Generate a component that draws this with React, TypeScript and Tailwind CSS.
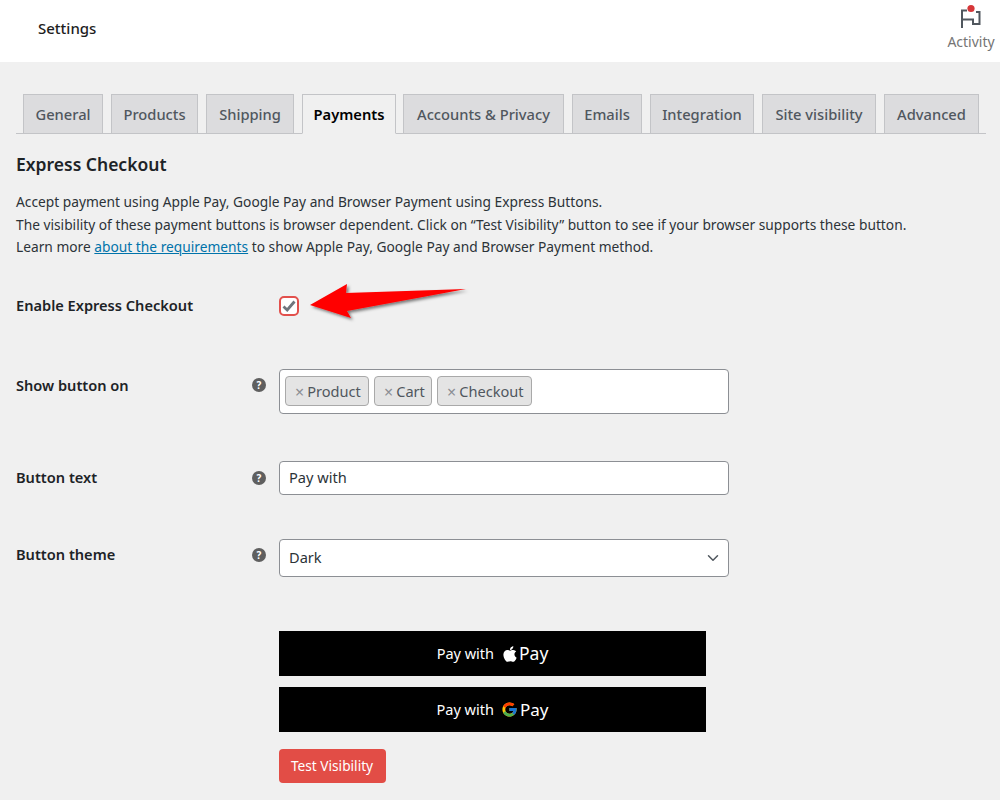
import React from "react";
import { FaApple } from "react-icons/fa";
import { FcGoogle } from "react-icons/fc";
import { FiChevronDown } from "react-icons/fi";

const tabs = [
  { name: "General", w: "w-[80px]" },
  { name: "Products", w: "w-[87px]" },
  { name: "Shipping", w: "w-[88px]" },
  { name: "Payments", w: "w-[94px]", active: true },
  { name: "Accounts & Privacy", w: "w-[161px] ml-[-1px]" },
  { name: "Emails", w: "w-[70px]" },
  { name: "Integration", w: "w-[104px]" },
  { name: "Site visibility", w: "w-[114px]" },
  { name: "Advanced", w: "w-[95px]" },
];

function Help() {
  return (
    <div className="flex h-[14px] w-[14px] items-center justify-center rounded-full bg-[#5f5f5f] text-[10px] font-bold leading-none text-white">
      ?
    </div>
  );
}

function Chip({ label, w }: { label: string; w: string }) {
  return (
    <div className={`flex h-[30px] items-center gap-[3px] rounded-[4px] border border-[#a9a9a9] bg-[#e4e4e4] pl-[9px] pt-[1px] text-[14.6px] text-[#50575e] ${w}`}>
      <span className="text-[16px] leading-none text-[#8c8f94]">×</span>
      <span>{label}</span>
    </div>
  );
}

export default function App() {
  return (
    <div className="relative h-[800px] w-[1000px] overflow-hidden bg-[#f0f0f0] font-['Noto_Sans',sans-serif] text-[14.6px] text-[#2c3338]">
      <header className="flex h-[62px] items-start justify-between bg-white">
        <div className="ml-[38px] mt-[18px] text-[15px] leading-[20px] font-medium text-[#1e1e1e]">Settings</div>
        <div className="mr-[5px] mt-[4px] flex w-[48px] flex-col items-center">
          <svg width="24" height="24" viewBox="0 0 24 24" fill="none">
            <path d="M3 24V6.5H8M3 15.5H14V20H20.5V8H17" stroke="#50575e" strokeWidth="2" />
            <circle cx="12" cy="4.5" r="3.6" fill="#d63638" />
          </svg>
          <div className="mt-[5px] text-[14px] leading-[18px] text-[#757575]">Activity</div>
        </div>
      </header>

      <main className="px-[16px]">
        <nav className="mr-[-2px] mt-[32px] flex h-[40px] gap-[8px] border-b border-[#c3c4c7] pl-[7px]">
          {tabs.map((t) => (
            <div
              key={t.name}
              className={`flex h-[40px] shrink-0 items-center justify-center border border-[#c3c4c7] pt-[1px] text-[14.7px] font-medium ${t.w} ${
                t.active ? "border-b-[#f0f0f0] bg-[#f0f0f0] font-semibold text-black" : "bg-[#dcdcde] text-[#50575e]"
              }`}
            >
              {t.name}
            </div>
          ))}
        </nav>

        <h2 className="mt-[17px] text-[17.5px] leading-[26px] font-semibold text-[#1d2327]">Express Checkout</h2>

        <div className="mt-[14px] text-[13.75px] leading-[22.5px]">
          <p>Accept payment using Apple Pay, Google Pay and Browser Payment using Express Buttons.</p>
          <p>The visibility of these payment buttons is browser dependent. Click on “Test Visibility” button to see if your browser supports these button.</p>
          <p>
            Learn more <span className="text-[#0073aa] underline">about the requirements</span> to show Apple Pay, Google Pay and Browser Payment method.
          </p>
        </div>

        <div className="mt-[37px] flex h-[20px] items-center">
          <div className="w-[263px] font-semibold text-[#1d2327]">Enable Express Checkout</div>
          <div className="flex h-[20px] w-[20px] items-center justify-center rounded-[5px] border-2 border-[#e2504c] bg-white">
            <svg width="14" height="12" viewBox="0 0 14 12" fill="none">
              <path d="M1.5 6.5L5.2 10L12.5 1.5" stroke="#70767d" strokeWidth="2.8" />
            </svg>
          </div>
        </div>

        <div className="mt-[53px] flex items-start">
          <div className="w-[236px] pt-[5px] font-semibold leading-[22px] text-[#1d2327]">Show button on</div>
          <div className="w-[27px] pt-[9px]"><Help /></div>
          <div className="flex h-[45px] w-[450px] items-center gap-[5px] rounded-[4px] border border-[#8c8f94] bg-white pl-[5px]">
            <Chip label="Product" w="w-[84px]" />
            <Chip label="Cart" w="w-[58px]" />
            <Chip label="Checkout" w="w-[95px]" />
          </div>
        </div>

        <div className="mt-[47px] flex items-start">
          <div className="w-[236px] pt-[5px] font-semibold leading-[22px] text-[#1d2327]">Button text</div>
          <div className="w-[27px] pt-[10px]"><Help /></div>
          <div className="flex h-[34px] w-[450px] items-center rounded-[4px] border border-[#8c8f94] bg-white px-[9px] pt-[1px]">Pay with</div>
        </div>

        <div className="mt-[44px] flex items-start">
          <div className="w-[236px] pt-[4px] font-semibold leading-[22px] text-[#1d2327]">Button theme</div>
          <div className="w-[27px] pt-[9px]"><Help /></div>
          <div className="flex h-[38px] w-[450px] items-center justify-between rounded-[4px] border border-[#8c8f94] bg-white pl-[9px] pr-[6px] pt-[1px]">
            <span>Dark</span>
            <FiChevronDown className="text-[18px] text-[#50575e]" />
          </div>
        </div>

        <div className="ml-[263px] mt-[54px] flex w-[427px] flex-col gap-[11px]">
          <div className="flex h-[45px] items-center justify-center bg-black pt-[1px] text-[14.5px] text-white">
            <span>Pay with</span>
            <FaApple className="ml-[7px] text-[18px]" />
            <span className="text-[17.5px]">Pay</span>
          </div>
          <div className="flex h-[45px] items-center justify-center bg-black pt-[1px] text-[14.5px] text-white">
            <span>Pay with</span>
            <FcGoogle className="ml-[7px] text-[17px]" />
            <span className="ml-[2px] text-[17px]">Pay</span>
          </div>
        </div>

        <div className="ml-[263px] mt-[17px] flex h-[34px] w-[107px] items-center justify-center rounded-[4px] bg-[#e24d46] pr-[1px] pt-[1px] text-[13.7px] text-white">
          Test Visibility
        </div>
      </main>

      <svg className="absolute left-[300px] top-[275px]" width="180" height="56" viewBox="300 275 180 56" fill="none">
        <defs>
          <filter id="sh" x="-10%" y="-20%" width="120%" height="150%">
            <feDropShadow dx="2" dy="2" stdDeviation="1.6" floodColor="#000" floodOpacity="0.5" />
          </filter>
        </defs>
        <polygon points="310,305 347,284 346,293 466,289 347,311 351,318" fill="#ff0000" filter="url(#sh)" />
      </svg>
    </div>
  );
}
